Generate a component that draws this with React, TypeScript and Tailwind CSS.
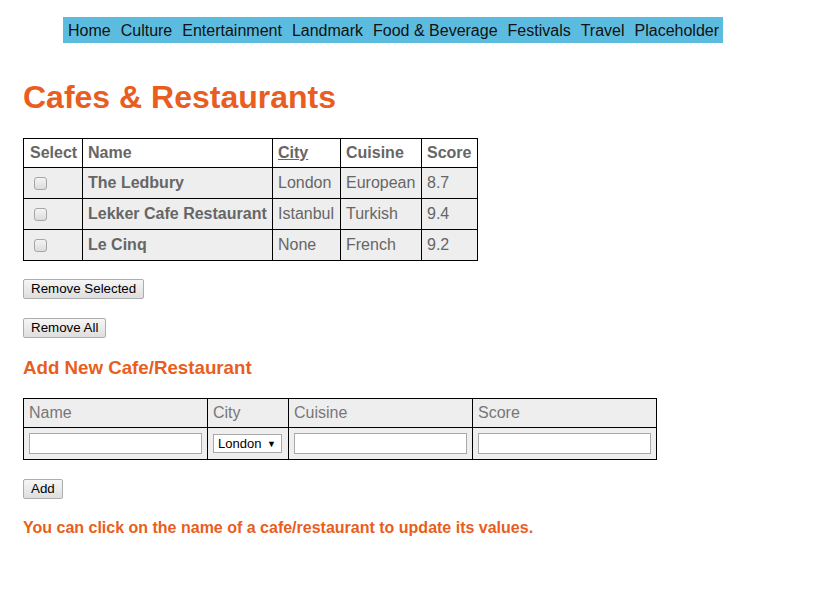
import React from "react";

const rows = [
  { name: "The Ledbury", city: "London", cuisine: "European", score: "8.7" },
  { name: "Lekker Cafe Restaurant", city: "Istanbul", cuisine: "Turkish", score: "9.4" },
  { name: "Le Cinq", city: "None", cuisine: "French", score: "9.2" },
];

const navItems = ["Home", "Culture", "Entertainment", "Landmark", "Food & Beverage", "Festivals", "Travel", "Placeholder"];

const btn =
  "block h-[20px] px-[7px] text-[13.33px] leading-none text-black bg-gradient-to-b from-[#f6f6f6] to-[#dedede] border border-[#adadad] rounded-[2px]";

export default function App() {
  return (
    <div className="min-h-[595px] w-[816px] bg-white pt-[17px] px-[23px] text-[16px] leading-[18px]" style={{ fontFamily: '"Liberation Sans", Arial, sans-serif' }}>
      <nav className="ml-[40px] w-[660px] h-[26px] bg-[#5bbcdf] flex items-center gap-[10px] px-[5px] pt-[2px] text-[#111] whitespace-nowrap">
        {navItems.map((n) => (
          <span key={n}>{n}</span>
        ))}
      </nav>

      <h1 className="mt-[36px] text-[32px] leading-[37px] font-bold text-[#e95e20]">Cafes &amp; Restaurants</h1>

      <table className="mt-[22px] border-collapse text-[#666]">
        <thead>
          <tr className="h-[29px] bg-white">
            <th className="border border-black w-[59px] pl-[6px] pr-[4px] text-left font-bold">Select</th>
            <th className="border border-black w-[190px] px-[5px] text-left font-bold">Name</th>
            <th className="border border-black w-[68px] px-[5px] text-left font-bold underline">City</th>
            <th className="border border-black w-[81px] px-[5px] text-left font-bold">Cuisine</th>
            <th className="border border-black w-[56px] px-[5px] text-left font-bold">Score</th>
          </tr>
        </thead>
        <tbody>
          {rows.map((r) => (
            <tr key={r.name} className="h-[31px] bg-[#eeeeee]">
              <td className="border border-black pl-[10px]">
                <input
                  type="checkbox"
                  className="appearance-none block w-[13px] h-[13px] border border-[#a6a6a6] rounded-[3px] bg-gradient-to-b from-[#f4f4f4] to-[#dcdcdc]"
                />
              </td>
              <td className="border border-black px-[5px] font-bold whitespace-nowrap">{r.name}</td>
              <td className="border border-black px-[5px]">{r.city}</td>
              <td className="border border-black px-[5px]">{r.cuisine}</td>
              <td className="border border-black px-[5px]">{r.score}</td>
            </tr>
          ))}
        </tbody>
      </table>

      <button className={`mt-[18px] ${btn}`}>Remove Selected</button>
      <button className={`mt-[19px] ${btn}`}>Remove All</button>

      <h3 className="mt-[19px] text-[18.72px] leading-[22px] font-bold text-[#e95e20]">Add New Cafe/Restaurant</h3>

      <table className="mt-[19px] border-collapse text-[#777]">
        <thead>
          <tr className="h-[29px] bg-[#eeeeee]">
            <th className="border border-black w-[184px] px-[5px] text-left font-normal">Name</th>
            <th className="border border-black w-[81px] px-[5px] text-left font-normal">City</th>
            <th className="border border-black w-[184px] px-[5px] text-left font-normal">Cuisine</th>
            <th className="border border-black w-[184px] px-[5px] text-left font-normal">Score</th>
          </tr>
        </thead>
        <tbody>
          <tr className="h-[32px] bg-[#eeeeee]">
            <td className="border border-black px-[5px]">
              <input type="text" className="block w-[173px] h-[21px] bg-white border border-[#a9a9a9]" />
            </td>
            <td className="border border-black px-[5px]">
              <div className="w-[69px] h-[19px] bg-white border border-[#a9a9a9] flex items-center justify-between pl-[4px] pr-[5px] text-[13px] text-black">
                <span>London</span>
                <span className="text-[9px]">▼</span>
              </div>
            </td>
            <td className="border border-black px-[5px]">
              <input type="text" className="block w-[173px] h-[21px] bg-white border border-[#a9a9a9]" />
            </td>
            <td className="border border-black px-[5px]">
              <input type="text" className="block w-[173px] h-[21px] bg-white border border-[#a9a9a9]" />
            </td>
          </tr>
        </tbody>
      </table>

      <button className={`mt-[19px] ${btn}`}>Add</button>

      <p className="mt-[20px] font-bold text-[#e95e20] leading-[18px]">
        You can click on the name of a cafe/restaurant to update its values.
      </p>
    </div>
  );
}
